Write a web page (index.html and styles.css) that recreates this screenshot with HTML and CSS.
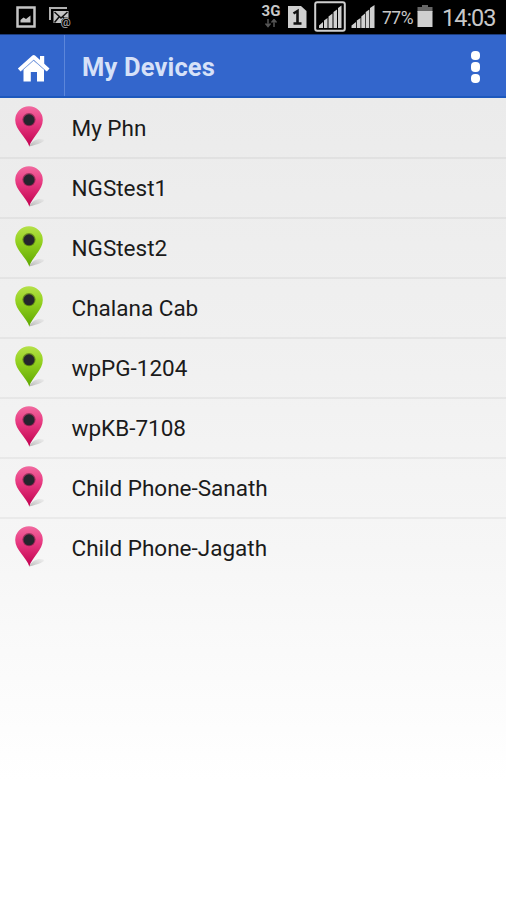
FILE: index.html
```html
<!DOCTYPE html>
<html lang="en">
<head>
    <meta charset="UTF-8">
    <meta name="viewport" content="width=device-width, initial-scale=1.0">
    <title>My Devices</title>
    <link rel="stylesheet" href="styles.css">
</head>
<body>
    <svg class="defs" width="0" height="0">
        <defs>
            <linearGradient id="pinkFill" x1="0" y1="0" x2="0" y2="1">
                <stop offset="0" stop-color="#f06a9f"/>
                <stop offset="0.35" stop-color="#ea3f85"/>
                <stop offset="1" stop-color="#c2004f"/>
            </linearGradient>
            <linearGradient id="greenFill" x1="0" y1="0" x2="0" y2="1">
                <stop offset="0" stop-color="#b5e04a"/>
                <stop offset="0.35" stop-color="#97d323"/>
                <stop offset="1" stop-color="#5fa800"/>
            </linearGradient>
            <linearGradient id="shade" x1="0" y1="1" x2="1" y2="0">
                <stop offset="0" stop-color="#777" stop-opacity="0.5"/>
                <stop offset="1" stop-color="#aaa" stop-opacity="0.1"/>
            </linearGradient>
            <symbol id="pin" viewBox="0 0 40 44">
                <path fill="url(#shade)" d="M19 41.500 C23 34 29 33 33.500 34.500 C36 36.500 28 39.500 19 41.500Z"/>
                <path d="M19.300 41.500 C17 33 5.200 25 5.200 15 A13.800 13.800 0 0 1 32.800 15 C32.800 25 21.500 33 19.300 41.500Z"/>
                <circle cx="19" cy="14.600" r="6.600" fill="#000" fill-opacity="0.35"/>
                <circle cx="19" cy="14.800" r="5.500" fill="#25252d"/>
            </symbol>
        </defs>
    </svg>

    <div class="status-bar">
        <svg class="status-left" width="60" height="24" viewBox="0 0 60 24">
            <rect x="2.500" y="1.500" width="17" height="19" fill="none" stroke="#c4c4c4" stroke-width="2.500"/>
            <path fill="#c4c4c4" d="M5.500 16.500 V14 L8.500 11.500 L11 13 L15.500 9.500 V16.500Z"/>
            <path fill="none" stroke="#b0b0b0" stroke-width="2" d="M35 14 V2 H52"/>
            <rect x="38.500" y="5" width="15" height="12" fill="#c4c4c4"/>
            <path fill="none" stroke="#111" stroke-width="1.500" d="M39.500 6 L46 12 L52.500 6 M39.500 16.500 L44 11 M52 16 L48 11"/>
            <circle cx="51" cy="16.500" r="5" fill="#000"/>
            <text class="at" x="45.500" y="19.500">@</text>
        </svg>
        <div class="network">
            <span>3G</span>
            <svg width="14" height="10" viewBox="0 0 14 10">
                <path fill="none" stroke="#555" stroke-width="1.500" d="M4 0 V7 M1.500 4.500 L4 7.500 L6.500 4.500 M10 8 V1 M7.500 3.500 L10 0.500 L12.500 3.500"/>
            </svg>
        </div>
        <svg class="sim" width="19" height="24" viewBox="0 0 19 24">
            <path fill="#cfcfcf" d="M0 1 H13 L18.500 6 V23 H0Z"/>
            <path fill="none" stroke="#111" stroke-width="2.600" d="M5.500 8.500 L9.500 6 V18 M5.500 18.500 H13.500"/>
        </svg>
        <svg class="signal" width="62" height="32" viewBox="0 0 62 32">
            <rect x="1.200" y="1.200" width="29.600" height="28.600" rx="2" fill="none" stroke="#cfcfcf" stroke-width="2"/>
            <path fill="#cfcfcf" d="M5 27 V24.500 L9 21 V27Z M10 27 V19.500 L13.500 17 V27Z M14.500 27 V15.500 L18.500 12.500 V27Z M19.500 27 V11 L23 8.500 V27Z M24 27 V7 L27.500 4.500 V27Z"/>
            <path fill="#cfcfcf" d="M37.500 27 V24.500 L42 21 V27Z M42.800 27 V19.500 L46.500 17 V27Z M47.300 27 V15.500 L51 12.500 V27Z M51.700 27 V11 L55.300 8.500 V27Z M56 27 V7 L60.500 4 V27Z"/>
        </svg>
        <span class="percent">77%</span>
        <svg class="battery" width="16" height="24" viewBox="0 0 16 24">
            <path fill="#666" d="M5 1 H11 V3 H15.500 V8 H0.500 V3 H5Z"/>
            <rect x="0.500" y="7" width="15" height="16" fill="#cfcfcf"/>
        </svg>
        <span class="clock">14:03</span>
    </div>

    <div class="header">
        <div class="home">
            <svg width="34" height="30" viewBox="0 0 34 30">
                <path fill="#fff" d="M23 3 H27.200 V12 L23 8Z M6.500 16.500 L16.500 7.500 L27 16.500 V28.500 H20 V19 H13.800 V28.500 H6.500Z"/>
                <path fill="none" stroke="#7d9fe0" stroke-width="0.800" d="M4.500 18 L16.700 7.200 L29 18"/>
                <path fill="none" stroke="#fff" stroke-width="4" stroke-linejoin="round" d="M2.200 17 L16.700 4 L31.200 17"/>
            </svg>
        </div>
        <h1>My Devices</h1>
        <div class="menu"><i></i><i></i><i></i></div>
    </div>

    <ul class="device-list">
        <li><svg class="pin pink"><use href="#pin"/></svg><span>My Phn</span></li>
        <li><svg class="pin pink"><use href="#pin"/></svg><span>NGStest1</span></li>
        <li><svg class="pin green"><use href="#pin"/></svg><span>NGStest2</span></li>
        <li><svg class="pin green"><use href="#pin"/></svg><span>Chalana Cab</span></li>
        <li><svg class="pin green"><use href="#pin"/></svg><span>wpPG-1204</span></li>
        <li><svg class="pin pink"><use href="#pin"/></svg><span>wpKB-7108</span></li>
        <li><svg class="pin pink"><use href="#pin"/></svg><span>Child Phone-Sanath</span></li>
        <li><svg class="pin pink"><use href="#pin"/></svg><span>Child Phone-Jagath</span></li>
    </ul>
</body>
</html>
```

FILE: styles.css
```css
* {
    box-sizing: border-box;
}
body {
    margin: 0;
    height: 900px;
    overflow: hidden;
    font-family: Roboto, sans-serif;
    background: linear-gradient(#ebebeb 98px, #f0f0f0 340px, #f6f6f6 550px, #ffffff 780px);
}
.defs {
    position: absolute;
}
.status-bar {
    display: flex;
    align-items: flex-start;
    height: 34px;
    background: #000;
    color: #c8c8c8;
}
.status-left {
    margin: 6px 0 0 15px;
}
.at {
    fill: #b8b8b8;
    font-size: 11.500px;
}
.network {
    display: flex;
    flex-direction: column;
    align-items: center;
    width: 20px;
    margin: 4px 0 0 186px;
    font-size: 15px;
    font-weight: 700;
    line-height: 15px;
}
.sim {
    margin: 5px 0 0 7px;
}
.signal {
    margin: 1px 0 0 7px;
}
.percent {
    width: 32px;
    margin: 8px 0 0 6px;
    font-size: 17.500px;
    line-height: 20px;
    letter-spacing: -0.5px;
}
.battery {
    margin: 4px 0 0 3px;
}
.clock {
    margin: 4px 0 0 9px;
    font-size: 23.500px;
    line-height: 28px;
    letter-spacing: -1px;
}
.header {
    display: flex;
    align-items: center;
    height: 64px;
    background: #3366cc;
    border-top: 1px solid #1c3c7c;
    border-bottom: 2px solid #1d58bd;
}
.home {
    display: flex;
    align-items: center;
    width: 65px;
    height: 100%;
    padding: 5px 0 0 17px;
    border-right: 1px solid #5c86da;
}
.header h1 {
    flex: 1;
    margin: 0 0 0 17px;
    padding-top: 3px;
    color: #d6e1f8;
    font-size: 25.500px;
    font-weight: 700;
    line-height: 30px;
    letter-spacing: 0.15px;
}
.menu {
    display: flex;
    flex-direction: column;
    gap: 2px;
    margin: 3px 26px 0 0;
}
.menu i {
    width: 9.500px;
    height: 9.500px;
    border-radius: 4px;
    background: #fff;
}
.device-list {
    margin: 0;
    padding: 0;
    list-style: none;
}
.device-list li {
    display: flex;
    align-items: center;
    height: 60px;
    padding-left: 10px;
    border-bottom: 2px solid rgba(0, 0, 0, 0.045);
    color: #1b1b1b;
    font-size: 22.500px;
}
.device-list li:first-child {
    height: 61px;
    padding-bottom: 1px;
}
.device-list li + li {
    padding-bottom: 2px;
}
.device-list li:last-child {
    border-bottom: none;
    height: 58px;
}
.device-list span {
    padding-top: 1px;
    line-height: 28px;
}
.pin {
    width: 40px;
    height: 44px;
    margin-right: 21.500px;
}
.pink {
    fill: url(#pinkFill);
}
.green {
    fill: url(#greenFill);
}
```
